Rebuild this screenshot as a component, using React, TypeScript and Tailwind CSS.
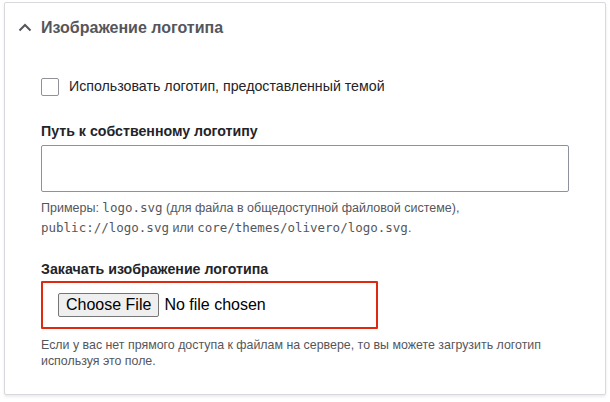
import React from 'react';

const mono = { fontFamily: '"DejaVu Sans Mono", monospace' };

export default function App() {
    return (
        <div className="w-[610px] h-[402px] bg-white pt-[2px] pl-[4px] pr-[4px]" style={{ fontFamily: '"Liberation Sans", Arial, sans-serif' }}>
            <div className="w-[602px] h-[393px] border border-[#d8d9de] rounded-[2px] shadow-[0_2px_3px_rgba(0,0,0,0.08)] bg-white">
                <div className="flex items-center h-[50px] pl-[13px] text-[#55565b]">
                    <svg width="14" height="14" viewBox="0 0 14 14" className="mr-[9px]">
                        <path d="M1.5 9.5 L7 4 L12.5 9.5" fill="none" stroke="#55565b" strokeWidth="2" />
                    </svg>
                    <span className="text-[16px] font-bold">Изображение логотипа</span>
                </div>

                <div className="pl-[36px] pr-[36px] pt-[24px]">
                    <label className="flex items-center gap-[10px] h-[20px]">
                        <span className="w-[18px] h-[18px] border border-[#919297] rounded-[2px] bg-white" />
                        <span className="text-[14.2px] text-[#232429]">Использовать логотип, предоставленный темой</span>
                    </label>

                    <div className="mt-[24px]">
                        <div className="text-[14.2px] font-bold text-[#232429] leading-[20px]">Путь к собственному логотипу</div>
                        <input className="mt-[4px] w-[528px] h-[47px] border border-[#8e929c] rounded-[2px] outline-none px-3 block" />
                        <div className="mt-[6px] text-[12.5px] leading-[19px] text-[#55565b]">
                            Примеры: <code style={mono}>logo.svg</code> (для файла в общедоступной файловой системе),
                            <br />
                            <code style={mono}>public://logo.svg</code> или <code style={mono}>core/themes/olivero/logo.svg</code>.
                        </div>
                    </div>

                    <div className="mt-[21px]">
                        <div className="text-[14.2px] font-bold text-[#232429] leading-[20px]">Закачать изображение логотипа</div>
                        <div className="mt-[2px] w-[337px] h-[48px] border-2 border-[#e02a10] rounded-[1px] flex items-center pl-[15px] text-[16px] text-black">
                            <span className="h-[24px] px-[7px] flex items-center border border-[#767676] rounded-[2px] bg-[#efefef]">Choose File</span>
                            <span className="ml-[5px]">No file chosen</span>
                        </div>
                        <div className="mt-[8px] text-[12.4px] leading-[16px] text-[#55565b]">
                            Если у вас нет прямого доступа к файлам на сервере, то вы можете загрузить логотип
                            <br />
                            используя это поле.
                        </div>
                    </div>
                </div>
            </div>
        </div>
    );
}
